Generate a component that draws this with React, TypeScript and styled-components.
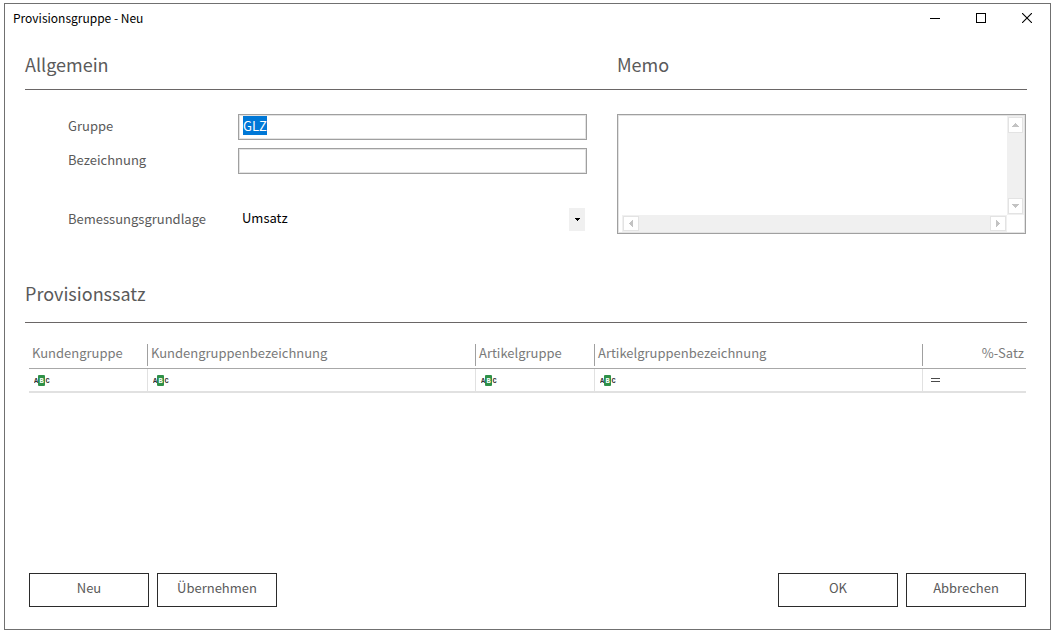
import React, { useEffect, useRef } from "react";
import styled, { createGlobalStyle } from "styled-components";

const GlobalStyle = createGlobalStyle`
  *, *::before, *::after { box-sizing: border-box; }
  html { background: #fff; }
  body { margin: 0; }
  body, button, input, select, textarea {
    font-family: "Noto Sans CJK SC", "Noto Sans", sans-serif;
    font-size: 13px;
    line-height: 20px;
    color: #5a5a5a;
  }
`;

const Page = styled.div`
  display: flex;
  min-height: 100vh;
  padding: 3px 6px 5px 4px;
`;

const Window = styled.main`
  flex: 1;
  min-width: 0;
  display: flex;
  flex-direction: column;
  border: 1px solid #707070;
  background: #fff;
`;

const TitleBar = styled.header`
  display: flex;
  justify-content: space-between;
  align-items: flex-start;
  height: 30px;
  padding-left: 8px;
`;

const Title = styled.h1`
  margin: 0;
  font-size: 12px;
  font-weight: 400;
  line-height: 28px;
  color: #000;
`;

const Controls = styled.div`
  display: flex;
`;

const ControlButton = styled.button`
  display: grid;
  place-items: center;
  width: 46px;
  height: 28px;
  padding: 0;
  border: 0;
  background: none;
  color: #000;
`;

const Content = styled.form`
  flex: 1;
  display: flex;
  flex-direction: column;
  padding: 0 23px 22px 20px;
`;

const Columns = styled.div`
  display: grid;
  grid-template-columns: minmax(0, 592fr) minmax(0, 410fr);
`;

const SectionHead = styled(Columns)`
  height: 56px;
  padding-top: 16px;
  border-bottom: 1px solid #6a6666;
`;

const Heading = styled.h2`
  margin: 0;
  font-size: 18px;
  font-weight: 400;
  line-height: 28px;
`;

const General = styled(Columns)`
  padding-top: 24px;
`;

const Fields = styled.div`
  display: grid;
  grid-template-columns: 170px minmax(0, 1fr);
  grid-template-rows: 26px 26px 17px 26px;
  row-gap: 8px;
  align-content: start;
  align-items: center;
  padding: 0 30px 0 43px;
`;

const Label = styled.label`
  padding-bottom: 3px;
`;

const Spacer = styled.div`
  grid-column: 1 / -1;
`;

const TextInput = styled.input`
  width: 100%;
  height: 26px;
  padding: 0 4px 3px;
  border: 1px solid #a0a0a0;
  border-radius: 0;
  box-shadow: inset 0 0 0 1px #e3e3e3;
  outline: 0;
  background: #fff;
  line-height: 17px;
  &::selection { background: #0078d7; color: #fff; }
`;

const SelectWrap = styled.div`
  position: relative;
  height: 26px;
`;

const Select = styled.select`
  width: 100%;
  height: 22px;
  padding: 0 24px 0 4px;
  border: 0;
  appearance: none;
  background: transparent;
  color: #000;
`;

const SelectArrow = styled.span`
  position: absolute;
  top: 1px;
  right: 2px;
  display: grid;
  place-items: center;
  width: 16px;
  height: 23px;
  background: #f0f0f0;
  pointer-events: none;
`;

const MemoBox = styled.div`
  display: grid;
  grid-template-columns: minmax(0, 1fr) 17px;
  grid-template-rows: 1fr 17px;
  height: 120px;
  margin-right: 1px;
  padding: 1px;
  border: 1px solid #a0a0a0;
  box-shadow: inset 0 0 0 1px #e3e3e3;
`;

const MemoText = styled.textarea`
  display: block;
  width: 100%;
  height: 100%;
  padding: 2px 4px;
  border: 0;
  outline: 0;
  resize: none;
  overflow: hidden;
  background: transparent;
`;

const ScrollTrack = styled.div<{ $horizontal?: boolean }>`
  display: flex;
  flex-direction: ${(p) => (p.$horizontal ? "row" : "column")};
  justify-content: space-between;
  margin-left: ${(p) => (p.$horizontal ? 3 : 0)}px;
  padding: 1px;
  background: #f0f0f0;
`;

const ScrollButton = styled.button<{ $horizontal?: boolean }>`
  display: grid;
  place-items: center;
  width: ${(p) => (p.$horizontal ? 16 : 15)}px;
  height: ${(p) => (p.$horizontal ? 15 : 16)}px;
  padding: 0;
  border: 1px solid #e3e3e3;
  background: #fff;
  color: #c3c3c3;
`;

const RatesHead = styled.div`
  margin-top: 45px;
  height: 44px;
  border-bottom: 1px solid #6a6666;
`;

const Table = styled.table`
  width: calc(100% - 5px);
  margin: 21px 0 0 4px;
  border-collapse: separate;
  border-spacing: 0;
  table-layout: fixed;
`;

const HeadCell = styled.th<{ $width?: number; $right?: boolean }>`
  width: ${(p) => (p.$width ? `${p.$width}px` : "auto")};
  height: 25px;
  padding: 0 0 2px;
  border-bottom: 1px solid #a8a8a8;
  font-weight: 400;
  color: #7a7a7a;
  text-align: ${(p) => (p.$right ? "right" : "left")};
  & > span {
    display: block;
    height: 22px;
    padding: 0 2px 0 3px;
    border-right: 1px solid #a0a0a0;
    line-height: 18px;
  }
  &:last-child > span { border-right: 0; }
`;

const FilterCell = styled.td`
  height: 24px;
  padding: 0 0 0 5px;
  border-right: 1px solid #e1e1e1;
  border-bottom: 2px solid #e1e1e1;
  vertical-align: middle;
  &:last-child { border-right: 0; padding-left: 8px; }
  svg { display: block; }
`;

const Footer = styled.footer`
  display: flex;
  gap: 8px;
  margin-top: auto;
  padding: 0 1px 0 4px;
`;

const ActionButton = styled.button<{ $pushRight?: boolean }>`
  width: 120px;
  height: 34px;
  margin-left: ${(p) => (p.$pushRight ? "auto" : "0")};
  padding: 0 0 4px;
  border: 1px solid #2b2b2b;
  border-radius: 0;
  background: #fff;
`;

const AbcIcon = () => (
  <svg width="16" height="11" viewBox="0 0 16 11" aria-hidden="true">
    <rect x="4" width="7" height="11" rx="1" fill="#2f9148" />
    <g fontFamily="Liberation Mono, monospace" fontSize="7" fontWeight="700" textAnchor="middle" fill="#333">
      <text x="2" y="8">A</text>
      <text x="7.5" y="8" fill="#fff">B</text>
      <text x="13.5" y="8">C</text>
    </g>
  </svg>
);

const EqualsIcon = () => (
  <svg width="9" height="4" viewBox="0 0 9 4" shapeRendering="crispEdges" aria-hidden="true">
    <path d="M0 0h9v1H0zM0 3h9v1H0z" fill="#4a4a4a" />
  </svg>
);

const arrows = {
  up: "M3 0h1v1h1v1h1v1h1v1H0V3h1V2h1V1h1z",
  down: "M0 0h7v1H6v1H5v1H4v1H3V3H2V2H1V1H0z",
  left: "M3 0h1v7H3V6H2V5H1V4H0V3h1V2h1V1h1z",
  right: "M0 0h1v1h1v1h1v1h1v1H3v1H2v1H1v1H0z",
};

const Arrow = ({ dir }: { dir: keyof typeof arrows }) => {
  const vertical = dir === "up" || dir === "down";
  const [w, h] = vertical ? [7, 4] : [4, 7];
  return (
    <svg width={w} height={h} viewBox={`0 0 ${w} ${h}`} shapeRendering="crispEdges" aria-hidden="true">
      <path d={arrows[dir]} fill="currentColor" />
    </svg>
  );
};

const columns = [
  { label: "Kundengruppe", width: 119 },
  { label: "Kundengruppenbezeichnung" },
  { label: "Artikelgruppe", width: 119 },
  { label: "Artikelgruppenbezeichnung" },
  { label: "%-Satz", width: 103, numeric: true },
];

export default function App() {
  const groupRef = useRef<HTMLInputElement>(null);

  useEffect(() => {
    groupRef.current?.focus();
    groupRef.current?.select();
  }, []);

  return (
    <>
      <GlobalStyle />
      <Page>
        <Window>
          <TitleBar>
            <Title>Provisionsgruppe - Neu</Title>
            <Controls>
              <ControlButton type="button" aria-label="Minimieren">
                <svg width="10" height="10" viewBox="0 0 10 10" shapeRendering="crispEdges">
                  <path d="M0 5h10v1H0z" />
                </svg>
              </ControlButton>
              <ControlButton type="button" aria-label="Maximieren">
                <svg width="10" height="10" viewBox="0 0 10 10" shapeRendering="crispEdges">
                  <path d="M.5.5h9v9h-9z" fill="none" stroke="#000" />
                </svg>
              </ControlButton>
              <ControlButton type="button" aria-label="Schließen">
                <svg width="10" height="10" viewBox="0 0 10 10">
                  <path d="M0 0l10 10M10 0L0 10" fill="none" stroke="#000" strokeWidth="1.1" />
                </svg>
              </ControlButton>
            </Controls>
          </TitleBar>

          <Content onSubmit={(e) => e.preventDefault()}>
            <SectionHead>
              <Heading>Allgemein</Heading>
              <Heading id="memo-heading">Memo</Heading>
            </SectionHead>
            <General>
              <Fields>
                <Label htmlFor="gruppe">Gruppe</Label>
                <TextInput id="gruppe" ref={groupRef} defaultValue="GLZ" />
                <Label htmlFor="bezeichnung">Bezeichnung</Label>
                <TextInput id="bezeichnung" />
                <Spacer />
                <Label htmlFor="grundlage">Bemessungsgrundlage</Label>
                <SelectWrap>
                  <Select id="grundlage" defaultValue="Umsatz">
                    <option>Umsatz</option>
                  </Select>
                  <SelectArrow>
                    <svg width="5" height="3" viewBox="0 0 5 3" shapeRendering="crispEdges" aria-hidden="true">
                      <path d="M0 0h5v1H4v1H3v1H2V2H1V1H0z" fill="#000" />
                    </svg>
                  </SelectArrow>
                </SelectWrap>
              </Fields>
              <MemoBox>
                <MemoText aria-labelledby="memo-heading" />
                <ScrollTrack>
                  <ScrollButton type="button" aria-label="Nach oben"><Arrow dir="up" /></ScrollButton>
                  <ScrollButton type="button" aria-label="Nach unten"><Arrow dir="down" /></ScrollButton>
                </ScrollTrack>
                <ScrollTrack $horizontal>
                  <ScrollButton type="button" $horizontal aria-label="Nach links"><Arrow dir="left" /></ScrollButton>
                  <ScrollButton type="button" $horizontal aria-label="Nach rechts"><Arrow dir="right" /></ScrollButton>
                </ScrollTrack>
              </MemoBox>
            </General>

            <RatesHead>
              <Heading>Provisionssatz</Heading>
            </RatesHead>
            <Table>
              <thead>
                <tr>
                  {columns.map((c) => (
                    <HeadCell key={c.label} scope="col" $width={c.width} $right={c.numeric}>
                      <span>{c.label}</span>
                    </HeadCell>
                  ))}
                </tr>
              </thead>
              <tbody>
                <tr>
                  {columns.map((c) => (
                    <FilterCell key={c.label}>{c.numeric ? <EqualsIcon /> : <AbcIcon />}</FilterCell>
                  ))}
                </tr>
              </tbody>
            </Table>

            <Footer>
              <ActionButton type="button">Neu</ActionButton>
              <ActionButton type="button">Übernehmen</ActionButton>
              <ActionButton type="submit" $pushRight>OK</ActionButton>
              <ActionButton type="button">Abbrechen</ActionButton>
            </Footer>
          </Content>
        </Window>
      </Page>
    </>
  );
}
